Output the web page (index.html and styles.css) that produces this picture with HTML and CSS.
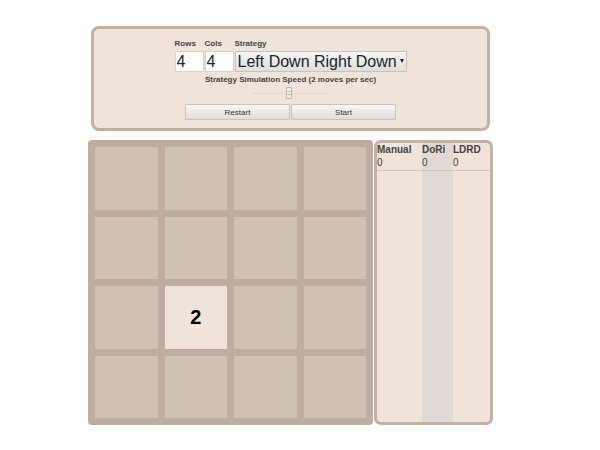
FILE: index.html
```html
<!DOCTYPE html>
<html lang="en">
<head>
<meta charset="utf-8">
<title>2048 Strategies</title>
<link rel="stylesheet" href="styles.css">
</head>
<body>
<form class="controls">
  <div class="fields">
    <div class="field field-number">
      <label for="rows">Rows</label>
      <input id="rows" type="text" inputmode="numeric" value="4">
    </div>
    <div class="field field-number">
      <label for="cols">Cols</label>
      <input id="cols" type="text" inputmode="numeric" value="4">
    </div>
    <div class="field field-strategy">
      <label for="strategy">Strategy</label>
      <div class="select-wrap">
        <select id="strategy">
          <option>Left Down Right Down</option>
        </select>
        <svg class="arrow" viewBox="0 0 4 4" aria-hidden="true"><path d="M0 0H4L2 4Z"/></svg>
      </div>
    </div>
  </div>
  <div class="speed">
    <label for="speed">Strategy Simulation Speed (2 moves per sec)</label>
    <input id="speed" type="range" min="0" max="100" value="48">
  </div>
  <div class="buttons">
    <button type="button">Restart</button>
    <button type="button">Start</button>
  </div>
</form>
<main class="game">
  <div class="board">
    <div class="cell"></div><div class="cell"></div><div class="cell"></div><div class="cell"></div>
    <div class="cell"></div><div class="cell"></div><div class="cell"></div><div class="cell"></div>
    <div class="cell"></div><div class="cell tile">2</div><div class="cell"></div><div class="cell"></div>
    <div class="cell"></div><div class="cell"></div><div class="cell"></div><div class="cell"></div>
  </div>
  <section class="scores">
    <table>
      <thead>
        <tr><th class="manual">Manual</th><th class="dori">DoRi</th><th>LDRD</th></tr>
      </thead>
      <tbody>
        <tr class="best"><td>0</td><td class="dori">0</td><td>0</td></tr>
        <tr><td></td><td class="dori"></td><td></td></tr>
      </tbody>
    </table>
  </section>
</main>
</body>
</html>
```
FILE: styles.css
```css
* {
  box-sizing: border-box;
}

body {
  margin: 0;
  padding: 26px 107px 26px 88px;
  background: #fff;
  color: #444;
  font-family: "Liberation Sans", Arial, sans-serif;
}

.controls {
  display: flex;
  flex-direction: column;
  align-items: center;
  margin: 0 3px 9px;
  padding: 10px 8px 8px;
  border: 3px solid #c4b0a4;
  border-radius: 8px;
  background: #efe3da;
  font-size: 8px;
  line-height: 10px;
}

label {
  display: block;
  font-weight: bold;
}

.fields {
  display: flex;
  gap: 1px;
}

.field-number {
  width: 29px;
}

.field label {
  margin-bottom: 2px;
}

.field input,
.field select {
  display: block;
  width: 100%;
  height: 21px;
  margin: 0;
  font: 16px "Liberation Sans", Arial, sans-serif;
  color: #222;
}

.field input {
  padding: 0 1px;
  border: 1px solid #d8d2cd;
  background: #fff;
}

.select-wrap {
  position: relative;
}

.field select {
  padding: 0 8px 0 2px;
  border: 1px solid #c6c4c2;
  border-radius: 1px;
  background: linear-gradient(#f6f6f6, #dedede);
  appearance: none;
}

.arrow {
  position: absolute;
  top: 8px;
  right: 3px;
  width: 4px;
  height: 4px;
  fill: #222;
  pointer-events: none;
}

.speed {
  display: flex;
  flex-direction: column;
  align-items: center;
  gap: 2px;
  margin-top: 3px;
}

.speed input {
  width: 74px;
  height: 12px;
  margin: 0;
  background: linear-gradient(#dcd7d2, #dcd7d2) center / 100% 1px no-repeat;
  appearance: none;
}

.speed input::-webkit-slider-thumb {
  width: 6px;
  height: 12px;
  border: 1px solid #bdb8b4;
  border-radius: 1px;
  background: linear-gradient(#c4c0bc 1px, transparent 1px 3px, #c4c0bc 3px) center / 4px 4px no-repeat, #f0eeec;
  appearance: none;
}

.buttons {
  display: flex;
  gap: 1px;
  margin-top: 5px;
}

.buttons button {
  width: 105px;
  height: 16px;
  padding: 0;
  border: 1px solid #c6c4c2;
  border-radius: 1px;
  background: linear-gradient(#f6f6f6, #dedede);
  color: #333;
  font: 8px "Liberation Sans", Arial, sans-serif;
}

.game {
  display: flex;
  gap: 1px;
}

.board {
  display: grid;
  flex: 1;
  grid-template-columns: repeat(4, 1fr);
  gap: 7px;
  padding: 7px;
  border-radius: 4px;
  background: #c0aca0;
}

.cell {
  display: flex;
  align-items: center;
  justify-content: center;
  aspect-ratio: 1;
  background: #cfc1b4;
}

.tile {
  background: #efe3da;
  color: #000;
  font-size: 20px;
  font-weight: bold;
}

.scores {
  display: flex;
  width: 119px;
  border: 3px solid #c4b0a4;
  border-radius: 7px;
  background: #efe3da;
}

table {
  width: 100%;
  height: 100%;
  border-collapse: collapse;
  table-layout: fixed;
  font-size: 10px;
  line-height: 13px;
}

th,
td {
  padding: 0;
  text-align: left;
  vertical-align: top;
}

thead tr {
  height: 13px;
}

.manual {
  width: 45px;
}

.dori {
  width: 31px;
  background: #e1d9d3;
}

.best {
  height: 14px;
  border-bottom: 1px solid #cfc7c1;
}
```
